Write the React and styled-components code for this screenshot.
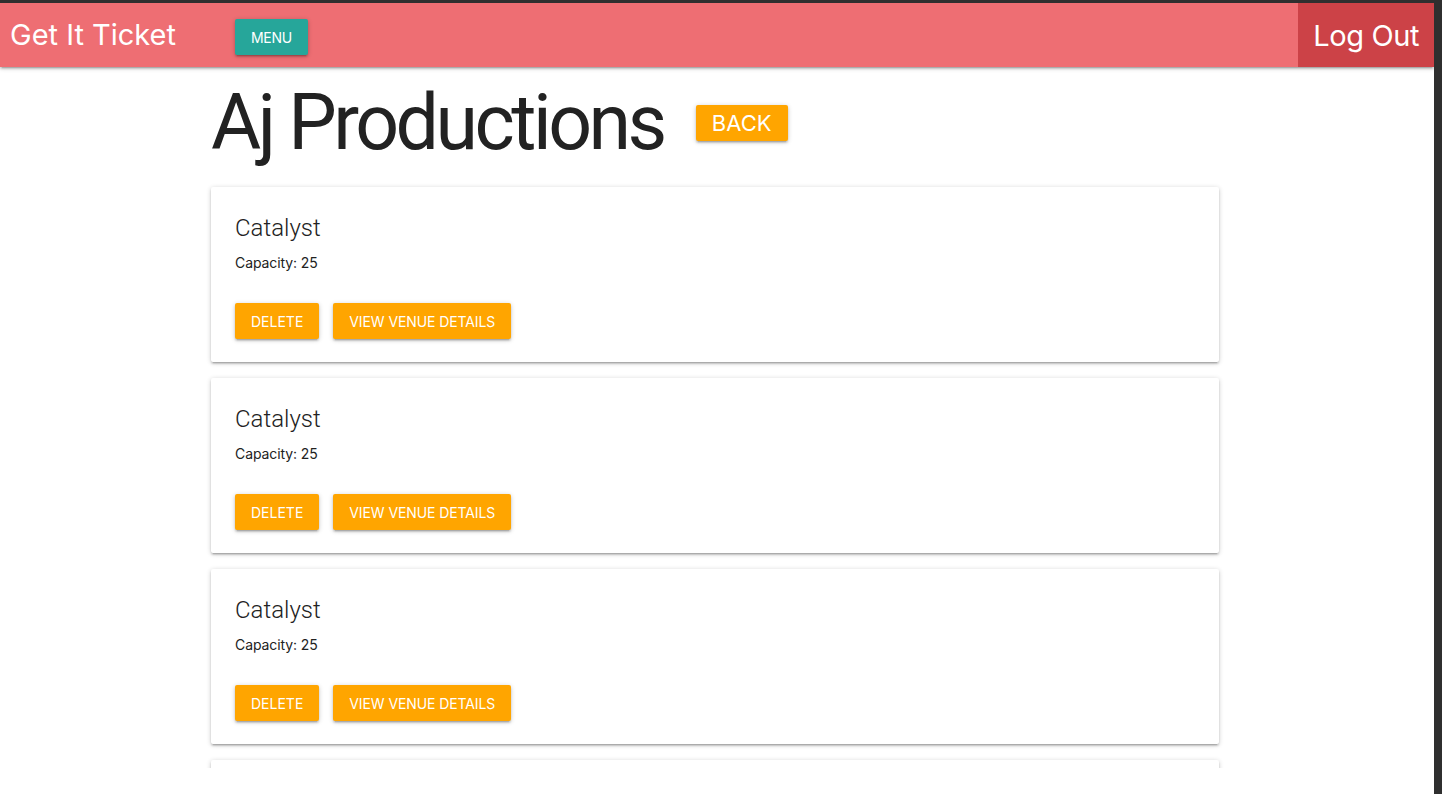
import React from "react";
import styled, { createGlobalStyle } from "styled-components";

const GlobalStyle = createGlobalStyle`
  html, body { margin: 0; padding: 0; background: #ffffff; }
  body { font-family: Inter, Roboto, "Liberation Sans", sans-serif; color: #222; }
  * { box-sizing: border-box; }
`;

const shadow =
  "0 2px 2px 0 rgba(0,0,0,0.14), 0 3px 1px -2px rgba(0,0,0,0.12), 0 1px 5px 0 rgba(0,0,0,0.2)";

const Screen = styled.div`
  display: flex;
  height: 794px;
  overflow: hidden;
`;

const Window = styled.div`
  flex: 1;
  display: flex;
  flex-direction: column;
  background: #ffffff;
`;

const TopEdge = styled.div`
  height: 3px;
  background: #2f2f2f;
`;

const SideEdge = styled.div`
  width: 8px;
  background: #2f2f2f;
`;

const Viewport = styled.div`
  height: 765px;
  overflow: hidden;
  background: #ffffff;
`;

const Nav = styled.nav`
  position: relative;
  z-index: 1;
  height: 64px;
  display: flex;
  align-items: center;
  background: #ee6e73;
  box-shadow: ${shadow};
`;

const Brand = styled.div`
  width: 235px;
  padding-left: 10px;
  color: #fff;
  font-size: 29px;
  line-height: 64px;
  white-space: nowrap;
`;

const Button = styled.button`
  height: 36px;
  margin-top: ${(p) => p.$shift || 0}px;
  padding: 0 ${(p) => p.$pad || 16}px;
  border: none;
  border-radius: 2px;
  background: ${(p) => p.$bg || "#ffa500"};
  color: #fff;
  font-family: Inter, Roboto, sans-serif;
  font-size: ${(p) => p.$size || 14}px;
  letter-spacing: ${(p) => p.$track || 0}px;
  text-transform: uppercase;
  box-shadow: ${shadow};
  cursor: pointer;
  white-space: nowrap;
`;

const LogOut = styled.div`
  margin-left: auto;
  height: 100%;
  display: flex;
  align-items: center;
  padding: 0 15px;
  background: #cc4247;
  color: #fff;
  font-size: 29px;
  letter-spacing: -0.4px;
`;

const Main = styled.main`
  margin-left: 211px;
  width: 1008px;
`;

const HeadingRow = styled.div`
  height: 112px;
  display: flex;
  align-items: center;
  gap: 32px;
`;

const Title = styled.h1`
  margin: 0;
  font-family: Roboto, "Liberation Sans", sans-serif;
  font-size: 77px;
  font-weight: 400;
  letter-spacing: -3.5px;
  line-height: 1;
  color: #222;
`;

const Card = styled.section`
  margin: 8px 0 16px;
  padding: 24px 24px 23px;
  background: #fff;
  border-radius: 2px;
  box-shadow: ${shadow};
`;

const CardTitle = styled.div`
  margin-top: 1px;
  font-family: Roboto, "Liberation Sans", sans-serif;
  font-size: 24px;
  font-weight: 300;
  line-height: 32px;
  color: #222;
`;

const CardText = styled.p`
  margin: 8px 0 29px;
  font-size: 14px;
  line-height: 22px;
  letter-spacing: -0.1px;
  color: #222;
`;

const Actions = styled.div`
  display: flex;
  gap: 14px;
`;

const venues = [
  { name: "Catalyst", capacity: 25 },
  { name: "Catalyst", capacity: 25 },
  { name: "Catalyst", capacity: 25 },
  { name: "Catalyst", capacity: 25 },
];

export default function App() {
  return (
    <>
      <GlobalStyle />
      <Screen>
        <Window>
          <TopEdge />
          <Viewport>
            <Nav>
              <Brand>Get It Ticket</Brand>
              <Button $bg="#26a69a" $shift={4} $track={-0.3}>Menu</Button>
              <LogOut>Log Out</LogOut>
            </Nav>
            <Main>
              <HeadingRow>
                <Title>Aj Productions</Title>
                <Button $size={22} $pad={16}>Back</Button>
              </HeadingRow>
              {venues.map((v, i) => (
                <Card key={i}>
                  <CardTitle>{v.name}</CardTitle>
                  <CardText>Capacity: {v.capacity}</CardText>
                  <Actions>
                    <Button>Delete</Button>
                    <Button $track={-0.1}>View Venue Details</Button>
                  </Actions>
                </Card>
              ))}
            </Main>
          </Viewport>
        </Window>
        <SideEdge />
      </Screen>
    </>
  );
}
